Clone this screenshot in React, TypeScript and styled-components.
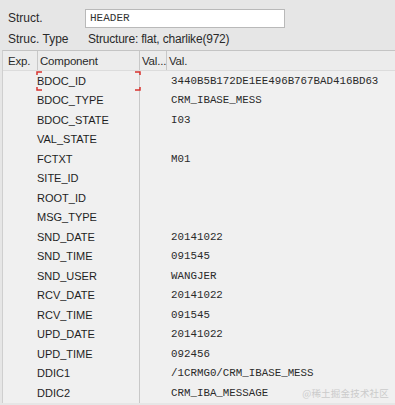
import React from 'react';
import styled, { createGlobalStyle } from 'styled-components';

const GlobalStyle = createGlobalStyle`
  html, body {
    margin: 0;
    padding: 0;
    background: #e6e6e6;
  }
  body {
    font-family: 'Liberation Sans', Arial, sans-serif;
    color: #1e1e1e;
  }
`;

const rows: [string, string][] = [
  ['BDOC_ID', '3440B5B172DE1EE496B767BAD416BD63'],
  ['BDOC_TYPE', 'CRM_IBASE_MESS'],
  ['BDOC_STATE', 'I03'],
  ['VAL_STATE', ''],
  ['FCTXT', 'M01'],
  ['SITE_ID', ''],
  ['ROOT_ID', ''],
  ['MSG_TYPE', ''],
  ['SND_DATE', '20141022'],
  ['SND_TIME', '091545'],
  ['SND_USER', 'WANGJER'],
  ['RCV_DATE', '20141022'],
  ['RCV_TIME', '091545'],
  ['UPD_DATE', '20141022'],
  ['UPD_TIME', '092456'],
  ['DDIC1', '/1CRMG0/CRM_IBASE_MESS'],
  ['DDIC2', 'CRM_IBA_MESSAGE'],
];

const Page = styled.div`
  position: relative;
  width: 395px;
  height: 405px;
  overflow: hidden;
  background: #e6e6e6;
`;

const Form = styled.div`
  display: flex;
  flex-direction: column;
  padding: 8px 0 0 8px;
`;

const FormRow = styled.div<{ $h: number }>`
  display: flex;
  align-items: center;
  height: ${({ $h }) => $h}px;
`;

const Label = styled.span`
  width: 80px;
  font-size: 12px;
  color: #2a2a2a;
`;

const Input = styled.div`
  width: 194px;
  height: 17px;
  margin-left: -3px;
  background: #ffffff;
  border: 1px solid #b9b9b9;
  display: flex;
  align-items: center;
  padding-left: 4px;
  font-family: 'Liberation Mono', 'Courier New', monospace;
  font-size: 11px;
  color: #333;
`;

const TypeText = styled.span`
  font-size: 12px;
  letter-spacing: -0.2px;
  color: #2a2a2a;
`;

const Table = styled.div`
  margin-left: 2px;
  border-top: 1px solid #c4c4c4;
  border-left: 1px solid #cfcfcf;
  background: #f0f0f0;
`;

const Grid = styled.div`
  display: grid;
  grid-template-columns: 34px 102px 27px 1fr;
`;

const HeadRow = styled(Grid)`
  height: 19px;
  background: #ececec;
  border-bottom: 1px solid #dcdcdc;
`;

const HeadCell = styled.div<{ $sep?: boolean }>`
  display: flex;
  align-items: center;
  padding-left: ${({ $sep }) => ($sep ? 2 : 5)}px;
  font-size: 11.5px;
  color: #2a2a2a;
  border-left: ${({ $sep }) => ($sep ? '1px solid #c8c8c8' : 'none')};
  white-space: nowrap;
  letter-spacing: -0.2px;
`;

const BodyRow = styled(Grid)`
  height: 19.5px;
`;

const ComponentCell = styled.div`
  position: relative;
  grid-column: 2;
  display: flex;
  align-items: center;
  font-size: 11px;
  color: #1e1e1e;
`;

const ValueCell = styled.div`
  grid-column: 3 / span 2;
  border-left: 1px solid #c8c8c8;
  display: flex;
  align-items: center;
  padding-left: 31px;
  font-family: 'Liberation Mono', 'Courier New', monospace;
  font-size: 10.8px;
  color: #2a2a2a;
  white-space: nowrap;
`;

const Focus = styled.svg`
  position: absolute;
  left: -1px;
  top: 0;
  width: 105px;
  height: 20px;
  pointer-events: none;
`;

const Watermark = styled.div`
  position: absolute;
  right: 6px;
  bottom: 5px;
  font-family: 'Noto Sans CJK SC', sans-serif;
  font-size: 9.5px;
  color: #cbcbcb;
  letter-spacing: 0.2px;
`;

const FocusMarker = () => (
  <Focus viewBox="0 0 105 20">
    <g stroke="#d8322e" strokeWidth="1.5" fill="none">
      <path d="M1 4V1H6" />
      <path d="M99 1H104V4" />
      <path d="M1 16V19H6" />
      <path d="M99 19H104V16" />
    </g>
  </Focus>
);

export default function App() {
  return (
    <Page>
      <GlobalStyle />
      <Form>
        <FormRow $h={20}>
          <Label>Struct.</Label>
          <Input>HEADER</Input>
        </FormRow>
        <FormRow $h={22}>
          <Label>Struc. Type</Label>
          <TypeText>Structure: flat, charlike(972)</TypeText>
        </FormRow>
      </Form>
      <Table>
        <HeadRow>
          <HeadCell>Exp.</HeadCell>
          <HeadCell $sep>Component</HeadCell>
          <HeadCell $sep>Val...</HeadCell>
          <HeadCell $sep>Val.</HeadCell>
        </HeadRow>
        {rows.map(([name, value], i) => (
          <BodyRow key={name}>
            <ComponentCell>
              {name}
              {i === 0 && <FocusMarker />}
            </ComponentCell>
            <ValueCell>{value}</ValueCell>
          </BodyRow>
        ))}
      </Table>
      <Watermark>@稀土掘金技术社区</Watermark>
    </Page>
  );
}
